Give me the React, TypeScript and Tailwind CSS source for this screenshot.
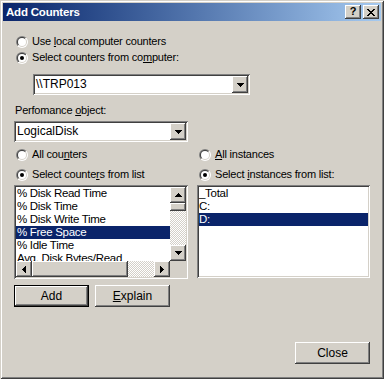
import React from "react";

const RAISED =
  "shadow-[inset_-1px_-1px_#404040,inset_1px_1px_#ffffff,inset_-2px_-2px_#808080,inset_2px_2px_#d4d0c8]";
const SUNKEN =
  "shadow-[inset_1px_1px_#808080,inset_-1px_-1px_#ffffff,inset_2px_2px_#404040,inset_-2px_-2px_#d4d0c8]";
const DITHER =
  "bg-[repeating-conic-gradient(#ffffff_0_25%,#d4d0c8_0_50%)] bg-[length:2px_2px]";

function Tri({ dir }: { dir: "up" | "down" | "left" | "right" }) {
  const rects: [number, number, number, number][] =
    dir === "down"
      ? [[0, 0, 7, 1], [1, 1, 5, 1], [2, 2, 3, 1], [3, 3, 1, 1]]
      : dir === "up"
      ? [[3, 0, 1, 1], [2, 1, 3, 1], [1, 2, 5, 1], [0, 3, 7, 1]]
      : dir === "right"
      ? [[0, 0, 1, 7], [1, 1, 1, 5], [2, 2, 1, 3], [3, 3, 1, 1]]
      : [[3, 0, 1, 7], [2, 1, 1, 5], [1, 2, 1, 3], [0, 3, 1, 1]];
  const vertical = dir === "up" || dir === "down";
  const w = vertical ? 7 : 4;
  const h = vertical ? 4 : 7;
  return (
    <svg width={w} height={h} viewBox={`0 0 ${w} ${h}`} shapeRendering="crispEdges">
      {rects.map((r, i) => (
        <rect key={i} x={r[0]} y={r[1]} width={r[2]} height={r[3]} fill="#000" />
      ))}
    </svg>
  );
}

function Radio({ checked }: { checked?: boolean }) {
  return (
    <svg width="12" height="12" viewBox="0 0 12 12" className="shrink-0">
      <defs>
        <linearGradient id="rdo" x1="0" y1="0" x2="1" y2="1">
          <stop offset="0.5" stopColor="#808080" />
          <stop offset="0.5" stopColor="#ffffff" />
        </linearGradient>
        <linearGradient id="rdi" x1="0" y1="0" x2="1" y2="1">
          <stop offset="0.5" stopColor="#404040" />
          <stop offset="0.5" stopColor="#d4d0c8" />
        </linearGradient>
      </defs>
      <circle cx="6" cy="6" r="6" fill="url(#rdo)" />
      <circle cx="6" cy="6" r="5" fill="url(#rdi)" />
      <circle cx="6" cy="6" r="4" fill="#ffffff" />
      {checked && <circle cx="6" cy="6" r="2" fill="#000000" />}
    </svg>
  );
}

function RadioRow({
  checked,
  children,
  className,
}: {
  checked?: boolean;
  children: React.ReactNode;
  className?: string;
}) {
  return (
    <div className={"flex items-center h-[13px] gap-[4px] ml-[2px] " + (className ?? "")}>
      <Radio checked={checked} />
      <span className="leading-[13px] whitespace-nowrap">{children}</span>
    </div>
  );
}

function U({ children }: { children: React.ReactNode }) {
  return <span className="underline underline-offset-[1px]">{children}</span>;
}

function Combo({ text, className }: { text: string; className?: string }) {
  return (
    <div className={"h-[21px] bg-white p-[2px] flex " + SUNKEN + " " + (className ?? "")}>
      <div className="flex-1 flex items-center pl-[1px] text-[12px] tracking-[0px] leading-[17px]">{text}</div>
      <div className={"w-[16px] h-[17px] bg-[#d4d0c8] flex items-center justify-center " + RAISED}>
        <Tri dir="down" />
      </div>
    </div>
  );
}

function ScrollBtn({ dir }: { dir: "up" | "down" | "left" | "right" }) {
  return (
    <div className={"w-[16px] h-[16px] shrink-0 bg-[#d4d0c8] flex items-center justify-center " + RAISED}>
      <Tri dir={dir} />
    </div>
  );
}

const counters = [
  "% Disk Read Time",
  "% Disk Time",
  "% Disk Write Time",
  "% Free Space",
  "% Idle Time",
  "Avg. Disk Bytes/Read",
];

export default function App() {
  return (
    <div className="w-[384px] h-[379px] bg-[#d4d0c8] p-[3px] flex flex-col shadow-[inset_1px_1px_#d4d0c8,inset_-1px_-1px_#404040,inset_2px_2px_#ffffff,inset_-2px_-2px_#808080] font-['Liberation_Sans',Arial,sans-serif] text-[11px] tracking-[-0.2px] text-black">
      {/* Title bar */}
      <div className="h-[18px] shrink-0 flex items-center bg-gradient-to-r from-[#0a246a] to-[#a6caf0] pl-[3px] pr-[2px]">
        <span className="flex-1 text-white font-bold text-[11.5px] tracking-[-0.2px] leading-[18px]">Add Counters</span>
        <div className={"w-[16px] h-[14px] bg-[#d4d0c8] flex items-center justify-center " + RAISED}>
          <span className="font-bold text-[11px] leading-[11px] mt-[-1px]">?</span>
        </div>
        <div className={"w-[16px] h-[14px] ml-[2px] bg-[#d4d0c8] flex items-center justify-center " + RAISED}>
          <svg width="8" height="7" viewBox="0 0 8 7" shapeRendering="crispEdges">
            <path d="M0 0h2v1h-2z M6 0h2v1h-2z M1 1h2v1h-2z M5 1h2v1h-2z M2 2h4v1h-4z M3 3h2v1h-2z M2 4h4v1h-4z M1 5h2v1h-2z M5 5h2v1h-2z M0 6h2v1h-2z M6 6h2v1h-2z" fill="#000" />
          </svg>
        </div>
      </div>

      {/* Body */}
      <div className="flex-1 flex flex-col px-[11px] pb-[12px]">
        <RadioRow className="mt-[14px]">
          Use <U>l</U>ocal computer counters
        </RadioRow>
        <RadioRow checked className="mt-[3px]">
          Select counters from co<U>m</U>puter:
        </RadioRow>
        <Combo text="\\TRP013" className="w-[217px] ml-[19px] mt-[10px]" />

        <div className="mt-[9px] h-[13px] leading-[13px] ml-[1px]">
          Perfomance <U>o</U>bject:
        </div>
        <Combo text="LogicalDisk" className="w-[174px] mt-[4px]" />

        <div className="flex mt-[6px]">
          <div className="w-[183px] flex flex-col">
            <RadioRow>
              All cou<U>n</U>ters
            </RadioRow>
            <RadioRow checked className="mt-[7px]">
              Select counte<U>r</U>s from list
            </RadioRow>
          </div>
          <div className="flex-1 flex flex-col">
            <RadioRow>
              <U>A</U>ll instances
            </RadioRow>
            <RadioRow checked className="mt-[7px]">
              Select <U>i</U>nstances from list:
            </RadioRow>
          </div>
        </div>

        <div className="flex mt-[4px] items-start">
          {/* Counters list */}
          <div className={"w-[174px] h-[94px] bg-white p-[2px] flex flex-col " + SUNKEN}>
            <div className="flex h-[74px]">
              <div className="flex-1 overflow-hidden text-[11.5px] tracking-[-0.3px]">
                {counters.map((c, i) => (
                  <div
                    key={c}
                    className={
                      "h-[13px] leading-[13px] pl-[1px] whitespace-nowrap " +
                      (i === 3 ? "bg-[#0a246a] text-white" : "")
                    }
                  >
                    {c}
                  </div>
                ))}
              </div>
              <div className="w-[16px] flex flex-col">
                <ScrollBtn dir="up" />
                <div className={"h-[8px] bg-[#d4d0c8] " + RAISED} />
                <div className={"flex-1 " + DITHER} />
                <ScrollBtn dir="down" />
              </div>
            </div>
            <div className="flex h-[16px]">
              <ScrollBtn dir="left" />
              <div className={"w-[96px] h-[16px] bg-[#d4d0c8] " + RAISED} />
              <div className={"flex-1 " + DITHER} />
              <ScrollBtn dir="right" />
              <div className="w-[16px] bg-[#d4d0c8]" />
            </div>
          </div>

          {/* Instances list */}
          <div className={"ml-[9px] w-[173px] h-[93px] bg-white p-[2px] text-[11.5px] tracking-[-0.3px] " + SUNKEN}>
            <div className="h-[13px] leading-[13px]">_Total</div>
            <div className="h-[13px] leading-[13px]">C:</div>
            <div className="h-[13px] leading-[13px] bg-[#0a246a] text-white">D:</div>
          </div>
        </div>

        <div className="flex mt-[6px] gap-[6px]">
          <div className="w-[75px] h-[22px] border border-black">
            <div className={"w-full h-full bg-[#d4d0c8] flex items-center justify-center text-[12px] tracking-[0px] " + RAISED}>
              Add
            </div>
          </div>
          <div className={"w-[75px] h-[22px] bg-[#d4d0c8] flex items-center justify-center text-[12px] tracking-[0px] " + RAISED}>
            <span>
              <U>E</U>xplain
            </span>
          </div>
        </div>

        <div className="flex-1" />
        <div className="flex justify-end">
          <div className={"w-[75px] h-[22px] bg-[#d4d0c8] flex items-center justify-center text-[12px] tracking-[0px] " + RAISED}>
            Close
          </div>
        </div>
      </div>
    </div>
  );
}
